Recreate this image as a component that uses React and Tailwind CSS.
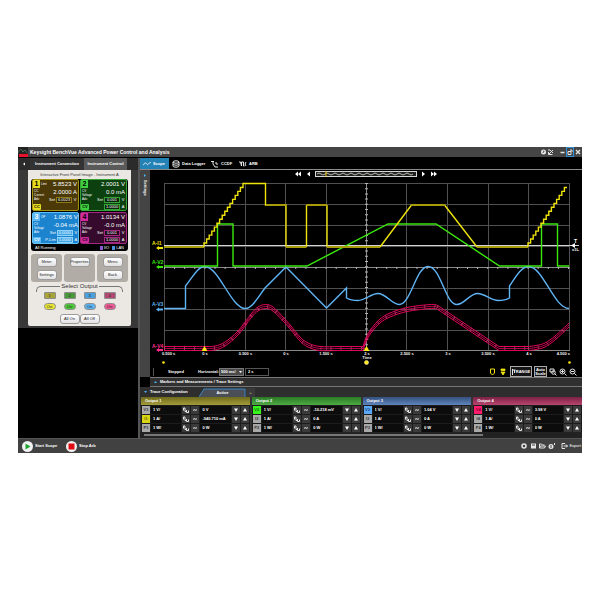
import React from "react";

const SCREENS = [
  {
    n: "1", mode: "Limt", volts: "5.8523 V", amps: "2.0000 A", notes: ["CC", "Current", "Adv"], badge: "CC",
    sets: ["6.0023", ""], box: "border-[#a39312] bg-[#4b3a08]", tag: "bg-[#e6dc1e] text-black", field: "border-[#8d7d18] bg-[#2c2202]",
  },
  {
    n: "2", mode: "", volts: "2.0001 V", amps: "0.0 mA", notes: ["CV", "Voltage", "Adv"], badge: "CV",
    sets: ["0.001", "1.0000"], box: "border-[#35a335] bg-[#0d400f]", tag: "bg-[#3fd23f] text-black", field: "border-[#35a335] bg-[#082808]",
  },
  {
    n: "3", mode: "OP", volts: "1.0876 V", amps: "-0.04 mA", notes: ["CV", "Voltage", "Adv"], badge: "CV",
    sets: ["0.0000", "1.0000"], box: "border-[#63c0f5] bg-[#1c84cf]", tag: "bg-[#5bb9f5] text-white", field: "border-[#8fd3fb] bg-[#3da4e6]",
  },
  {
    n: "4", mode: "", volts: "1.0134 V", amps: "-0.0 mA", notes: ["CV", "Voltage", "Adv"], badge: "CV",
    sets: ["0.001", "1.0000"], box: "border-[#a3287f] bg-[#360a2c]", tag: "bg-[#d02a9c] text-black", field: "border-[#a3287f] bg-[#22051b]",
  },
];

const OUTPUTS = [
  { name: "Output 1", head: "from-[#6f6a1c] to-[#a39c3a]", rows: [["V1", "1 V/", "0 V", ""], ["I1", "1 A/", "-940.710 mA", "bg-[#d8d414] text-[#5c5a00]"], ["P1", "1 W/", "0 W", ""]] },
  { name: "Output 2", head: "from-[#2b7a25] to-[#4faa45]", rows: [["V2", "1 V/", "-10.218 mV", "bg-[#35f51c] text-[#0d6b04]"], ["I2", "1 A/", "0 A", ""], ["P2", "1 W/", "0 W", ""]] },
  { name: "Output 3", head: "from-[#34507e] to-[#5f86bd]", rows: [["V3", "1 V/", "1.04 V", "bg-[#5ba8f5] text-[#0d3f78]"], ["I3", "1 A/", "0 A", ""], ["P3", "1 W/", "0 W", ""]] },
  { name: "Output 4", head: "from-[#7d2144] to-[#b8466f]", rows: [["V4", "1 V/", "3.98 V", "bg-[#ff1a6c] text-[#7d0030]"], ["I4", "1 A/", "0 A", ""], ["P4", "1 W/", "0 W", ""]] },
];

function stairs(x, y, dx, dy, count) {
  let d = "";
  for (let i = 0; i < count; i++) d += `v${-dy} h${dx} `;
  return `M${x} ${y} ${d}`;
}

function smooth(points) {
  let d = `M${points[0][0]} ${points[0][1]}`;
  for (let i = 0; i < points.length - 1; i++) {
    const a = points[i - 1] || points[i];
    const b = points[i];
    const c = points[i + 1];
    const e = points[i + 2] || c;
    d += ` C${b[0] + (c[0] - a[0]) / 6} ${b[1] + (c[1] - a[1]) / 6} ${c[0] - (e[0] - b[0]) / 6} ${c[1] - (e[1] - b[1]) / 6} ${c[0]} ${c[1]}`;
  }
  return d;
}

const RED = [
  smooth([[164, 348.5], [190, 348.5], [204, 348.5], [215, 348], [225, 344], [238, 333], [251, 316], [258, 309], [265.5, 306.5], [273, 309], [284, 320], [291, 328], [300, 339], [308, 345], [320, 348.5], [340, 348.5], [363, 348.5]]),
  smooth([[363, 348.5], [366, 340], [371, 331], [380, 321], [390, 315], [407, 309.5], [430, 306.5], [437, 307]]),
  "M437 307 L499 348.5 H528",
  smooth([[528, 348.5], [536, 347.5], [545, 345], [555, 338], [569, 325]]),
].join(" ");

const BLUE =
  "M164 308.5 H185.5 V286 C192 278 198 266.5 204.5 266.5 C219 266.5 231 308.5 245.5 308.5 C252 308.5 259 296 265 288 L286 267 L326.5 308 L346.5 288 V298 C350 300 354 300.5 358 300.5 C365 300.5 371 293.5 378 293.5 C386 293.5 392 304.5 399 304.5 C411 304.5 416 266.5 428 266.5 C441 266.5 445 304.5 457 304.5 C464 304.5 470 293.5 477.5 293.5 C485 293.5 491 300.5 498 300.5 C502 300.5 506 300 509.5 298 V286 C515 278 521 266.5 528.5 266.5 C543 266.5 554 308.5 569 308.5";

const COLS = [164.5, 204.5, 245.5, 285.5, 326.5, 366.5, 406.5, 447.5, 488.5, 528.5, 569.5];
const ROWS = [183.5, 204.5, 225.5, 246.5, 267.5, 288.5, 309.5, 330.5, 350.5];

function Chart() {
  return (
    <svg viewBox="150 178 432 188" className="block w-full" fontFamily="Liberation Sans, sans-serif" fontSize="5" fontWeight="700">
      <g stroke="#505050" strokeWidth="1">
        {COLS.map((x) => <path key={x} d={`M${x} 183 V351`} />)}
        {ROWS.map((y) => <path key={y} d={`M164 ${y} H570`} />)}
      </g>
      <path d="M366.5 183 V351 M164 267.5 H570 M164 350.5 H570" stroke="#8a8a8a" strokeWidth="1" />
      <path d="M366.5 183 V351" stroke="#b5b5b5" strokeWidth="3" strokeDasharray="1 4.2" />
      <path d="M164 268 H570" stroke="#b5b5b5" strokeWidth="2" strokeDasharray="1 9.1" />
      <path d="M164 245.5 H579" stroke="#d4d4d4" strokeWidth="1" />
      <g fill="none" strokeWidth="1.4">
        <g stroke="#e2005a" strokeWidth="1">
          <path d={RED} stroke="#d97a9b" strokeWidth="4" strokeDasharray="0.8 9.2" opacity="0.7" />
          <path d={RED} transform="translate(0 -2)" />
          <path d={RED} strokeWidth="1" opacity="0.8" />
          <path d={RED} transform="translate(0 2)" />
        </g>
        <path d={BLUE} stroke="#5fb4f5" />
        <path d="M164 266 H217.500 V224 H233 V266 H307 L388 224 H436 L499.500 266 H541.500 V224 H557.500 V266 H569" stroke="#3be80c" />
        <path d="M164 247 H204" stroke="#a89c08" strokeWidth="1.800" />
        <path d={`${stairs(204, 247, 2.6, 3.97, 16)} V183.500 H265.500 V205 H286 V247 M306.500 247 V205 M327 205 V247 M380 247 L411.500 205 M444.500 205 L477 247`} stroke="#efe30c" />
        <path d="M266 205 H286 M286 247 H306.500 M306.500 205 H327 M327 247 H380 M411 205 H445 M477 247 H528" stroke="#a89c08" strokeWidth="1.800" />
        <path d={stairs(528, 247, 2.6, 3.97, 15)} stroke="#efe30c" />
      </g>
      <path d="M204.500 346 l3 5 h-6 z M366.500 346 l3 5 h-6 z" fill="#ffe816" />
      <path d="M571 245.500 l4 -2.500 v5 z" fill="#fff" />
      <text x="574" y="243" fill="#fff">T</text>
      <text x="572" y="251" fill="#fff" fontSize="4">x1L</text>
      <g>
        <text x="152" y="245" fill="#f2e60c">A-I1</text>
        <text x="152" y="264" fill="#3be80c">A-V2</text>
        <text x="152" y="306" fill="#5fb4f5">A-V3</text>
        <text x="152" y="348" fill="#ff2a8c">A-V4</text>
        <path d="M156 248 l3 -2 v1 h4 v2 h-4 v1 z" fill="#f2e60c" />
        <path d="M156 267 l3 -2 v1 h4 v2 h-4 v1 z" fill="#3be80c" />
        <path d="M156 309.500 l3 -2 v1 h4 v2 h-4 v1 z" fill="#5fb4f5" />
        <path d="M156 350 l3 -2 v1 h4 v2 h-4 v1 z" fill="#ff2a8c" />
      </g>
      <g fill="#f4f4f4" fontSize="4">
        <text x="162" y="355">0.500 s</text>
        <g textAnchor="middle">
          <text x="205" y="355">0 s</text>
          <text x="245.500" y="355">0.500 s</text>
          <text x="286" y="355">0 s</text>
          <text x="326" y="355">1.500 s</text>
          <text x="367" y="355">2 s</text>
          <text x="367" y="359">Time</text>
          <text x="407" y="355">2.500 s</text>
          <text x="448" y="355">3 s</text>
          <text x="488" y="355">3.500 s</text>
          <text x="529" y="355">4 s</text>
        </g>
        <text x="570" y="355" textAnchor="end">4.500 s</text>
      </g>
      <g fill="#ffe816">
        <circle cx="163.500" cy="362.500" r="1.300" />
        <circle cx="366.500" cy="362.500" r="2" stroke="#fff6a0" strokeWidth="0.600" />
        <circle cx="569.500" cy="362.500" r="1.300" />
      </g>
    </svg>
  );
}

function Svg({ w = 8, children }) {
  return (
    <svg width={w} height="8" viewBox={`0 0 ${w} 8`} fill="none" stroke="#e6e6e6" strokeWidth="1" className="shrink-0">
      {children}
    </svg>
  );
}

function PillButton({ children }) {
  return (
    <button className="flex h-[10px] w-[20px] items-center justify-center rounded-[3px] border border-[#9b9b9b] bg-gradient-to-b from-white to-[#e2e2e2] text-[4px] leading-[4px] text-[#222]">
      {children}
    </button>
  );
}

function OutputScreen({ s }) {
  return (
    <div className={`flex h-[32px] justify-between whitespace-nowrap rounded-[2px] border text-[4px] leading-[4px] text-white ${s.box}`}>
      <div className="flex w-[8px] flex-col items-start">
        <span className={`h-[8px] w-[7px] text-center text-[7px] font-bold leading-[8px] ${s.tag}`}>{s.n}</span>
        <div className="flex flex-col pl-px pt-px text-[3px]">
          {s.notes.map((n) => <span key={n}>{n}</span>)}
        </div>
        <span className={`mt-auto h-[6px] w-[8px] rounded-[1px] text-center font-bold leading-[6px] ${s.tag}`}>{s.badge}</span>
      </div>
      <span className="w-[6px] pt-[2px] text-[3px]">{s.mode}</span>
      <div className="flex flex-1 flex-col items-end pr-px">
        <span className="h-[8px] text-[6px] leading-[8px]">{s.volts}</span>
        <span className="h-[8px] text-[6px] leading-[8px]">{s.amps}</span>
        <div className="flex h-[7px] items-center gap-px">
          <span>Set</span>
          <span className={`h-[6px] w-[16px] border text-center ${s.field}`}>{s.sets[0]}</span>
          <span className="w-[4px] text-center">V</span>
        </div>
        {s.sets[1] && (
          <div className="flex h-[7px] items-center gap-px">
            {s.n === "3" && <span>P-Lim</span>}
            <span className={`h-[6px] w-[16px] border text-center ${s.field}`}>{s.sets[1]}</span>
            <span className="w-[4px] text-center">A</span>
          </div>
        )}
      </div>
    </div>
  );
}

function InstrumentPanel() {
  const keys = ["bg-[#a9a43a]", "bg-[#4a9a3c]", "bg-[#4a9fdc]", "bg-[#b04a72]"];
  const ons = ["bg-[#e8e436]", "bg-[#4fc93c]", "bg-[#5fb4f0]", "bg-[#f05a94]"];
  return (
    <div className="rounded-b-[2px] bg-[#ebe8e3] px-[3px] pb-[2px] text-[#333]">
      <h2 className="h-[9px] whitespace-nowrap text-center text-[4px] leading-[9px]">Interactive Front Panel Image - Instrument A</h2>
      <div className="rounded-[3px] bg-black px-px">
        <div className="grid grid-cols-2 gap-px">
          {SCREENS.map((s) => <OutputScreen key={s.n} s={s} />)}
        </div>
        <div className="flex h-[7px] items-center gap-[3px] px-[3px] text-[4px] leading-[7px] text-white">
          <span>All Running</span>
          <span className="ml-auto flex items-center gap-px"><i className="h-[4px] w-[3px] bg-[#8a5ad0]" />I/O</span>
          <span className="flex items-center gap-px"><i className="h-[4px] w-[3px] bg-[#4a8fe0]" />LAN</span>
        </div>
      </div>
      <div className="mt-[3px] grid grid-cols-3 gap-[2px]">
        {[["Meter", "Settings"], ["Properties"], ["Menu", "Back"]].map((g) => (
          <div key={g[0]} className="flex h-[28px] flex-col items-center gap-[3px] rounded-[3px] bg-[#b1ada6] pt-[3px]">
            {g.map((b) => <PillButton key={b}>{b}</PillButton>)}
          </div>
        ))}
      </div>
      <div className="mt-px flex h-[9px] items-start px-[5px]">
        <span className="mt-[3px] h-[6px] flex-1 rounded-tl-[5px] border-l border-t border-[#777]" />
        <h3 className="px-px text-[6px] leading-[7px]">Select Output</h3>
        <span className="mt-[3px] h-[6px] flex-1 rounded-tr-[5px] border-r border-t border-[#777]" />
      </div>
      <div className="flex justify-center gap-[8px]">
        {keys.map((c, i) => (
          <button key={c} className={`h-[7px] w-[12px] rounded-[1px] border border-[#8c8c8c] text-[4px] leading-[5px] text-[#222] ${c}`}>{i + 1}</button>
        ))}
      </div>
      <div className="mt-[4px] flex justify-center gap-[8px]">
        {ons.map((c) => (
          <button key={c} className={`h-[7px] w-[12px] rounded-full border border-[#8c8c8c] text-[4px] leading-[5px] text-[#222] ${c}`}>On</button>
        ))}
      </div>
      <div className="mt-[4px] flex justify-center">
        <PillButton>All On</PillButton>
        <PillButton>All Off</PillButton>
      </div>
    </div>
  );
}

function Trace({ row, output }) {
  const [id, scale, offset, tone] = row;
  const cell = "h-[8px] min-w-0 flex-1 bg-[#0c0c0c] px-[2px] text-[4px] font-bold leading-[8px] text-white outline-none";
  const btn = "flex h-[8px] w-[8px] shrink-0 items-center justify-center bg-[#3a3a3a]";
  return (
    <div className="flex h-[9px] items-center gap-px px-px">
      <button className={`h-[8px] w-[8px] shrink-0 text-center text-[4px] font-bold leading-[8px] ${tone || "bg-[#a8a8a8] text-[#333]"}`}>{id}</button>
      <input className={cell} defaultValue={scale} aria-label={`${output} ${id} scale`} />
      <button className={btn} aria-label={`${id} coupling`}><Svg><path d="M1.500 4.500 V2 h1.500 v3.500 h1.500 M4.500 4 v2.500 h2 v-2" /></Svg></button>
      <button className={btn} aria-label={`${id} wave`}><Svg><path d="M2 4.500 q1 -1.500 2 -0.500 t2 -0.500" /></Svg></button>
      <input className={cell} defaultValue={offset} aria-label={`${output} ${id} offset`} />
      <button className={btn} aria-label={`${id} down`}><Svg><path d="M2 2.500 h4 l-2 3.500 z" fill="#fff" stroke="none" /></Svg></button>
      <button className={btn} aria-label={`${id} up`}><Svg><path d="M2 5.500 h4 l-2 -3.500 z" fill="#fff" stroke="none" /></Svg></button>
    </div>
  );
}

function ScopeTabs() {
  const tab = "flex h-[11px] items-center gap-[2px] text-[4px] font-bold text-white";
  return (
    <nav className="flex h-[12px] items-end gap-[3px] border-b border-[#8a8a8a] bg-black">
      <button className={`${tab} w-[29px] bg-[#2382b6] pl-[3px]`}>
        <Svg><path d="M0 5 C1 5 1 3 2.500 3 S4 6 5.500 4 S7 2 8 3" /></Svg>Scope
      </button>
      <button className={`${tab} w-[36px]`}>
        <Svg><ellipse cx="4" cy="2" rx="3" ry="1.200" /><path d="M1 2 v4 c0 1.500 6 1.500 6 0 v-4 M1 4 c0 1.500 6 1.500 6 0" /></Svg>Data Logger
      </button>
      <button className={`${tab} w-[25px]`}>
        <Svg><path d="M0 1.500 h3 M2 1 v3 l2 3 h3 M5 2 v2 h2" /></Svg>CCDF
      </button>
      <button className={tab}>
        <Svg><path d="M0 2 h1.500 l1 4 v-4 h2 v4 h1 M7 2 l-1 2 l1 2" /></Svg>ARB
      </button>
    </nav>
  );
}

function ScopeControls() {
  return (
    <div className="flex h-[11px] items-center pl-[3px] pr-[5px] text-[4px] font-bold text-white">
      <span className="h-[8px] w-px bg-[#555]" />
      <span className="ml-[14px] w-[30px]">Stopped</span>
      <label htmlFor="horizontal" className="w-[21px]">Horizontal:</label>
      <span className="flex h-[8px] w-[25px] items-center border border-[#777] bg-[#4a4a4a]">
        <select id="horizontal" className="h-[6px] min-w-0 flex-1 appearance-none bg-transparent px-px text-[4px] leading-[6px]">
          <option>500 ms/</option>
        </select>
        <Svg w={5}><path d="M1 3 h3 l-1.500 2 z" fill="#fff" stroke="none" /></Svg>
      </span>
      <input aria-label="Horizontal delay" defaultValue="2 s" className="ml-px h-[8px] w-[24px] border border-[#555] bg-black px-[2px] text-[4px] leading-[6px]" />
      <div className="ml-auto flex items-center gap-[2px]">
        <button aria-label="Marker one"><Svg><path d="M1.500 1 h4 v4 l-2 2 l-2 -2 z" stroke="#f2e60c" /></Svg></button>
        <button aria-label="Marker two" className="mr-px"><Svg><path d="M2 1 h4 v1.500 h-4 z M2 4 h4 l-2 3 z" fill="#f2e60c" stroke="#f2e60c" strokeWidth="0.800" /></Svg></button>
        <button className="flex h-[11px] w-[22px] items-center justify-center border border-[#aaa] bg-[#151515]"><Svg w={4}><path d="M0.500 1 v6 M0.500 2 h3 M2.500 2 v3" /></Svg>RANGE</button>
        <button className="h-[11px] w-[13px] border border-[#aaa] bg-[#151515] leading-[4px]">Auto Scale</button>
        <button aria-label="Zoom area"><Svg><path d="M1 1 h4 v3 h-4 z M7.500 7.500 l-2 -2" /><circle cx="4.500" cy="4.500" r="1.800" /></Svg></button>
        <button aria-label="Zoom in"><Svg><circle cx="3.500" cy="3.500" r="2.500" /><path d="M5.500 5.500 L7.500 7.500 M2 3.500 h3 M3.500 2 v3" /></Svg></button>
        <button aria-label="Zoom out"><Svg><circle cx="3.500" cy="3.500" r="2.500" /><path d="M5.500 5.500 L7.500 7.500 M2 3.500 h3" /></Svg></button>
      </div>
    </div>
  );
}

function Navigator() {
  return (
    <div className="flex h-[8px] items-center justify-center gap-[2px]">
      <button aria-label="First"><Svg><path d="M3 1.500 v5 l-3 -2.500 z M6 1.500 v5 l-3 -2.500 z" fill="#fff" stroke="none" /></Svg></button>
      <button aria-label="Previous"><Svg><path d="M5 1.500 v5 l-3 -2.500 z" fill="#fff" stroke="none" /></Svg></button>
      <svg width="102" height="6" viewBox="0 0 102 6" fill="none">
        <rect x="0.500" y="0.500" width="101" height="5" fill="#222" stroke="#d8d8d8" />
        <path d="M2 3 q2 -2 4 0 t4 0 t4 0 t4 0 t4 0 t4 0 t4 0 t4 0 t4 0 t4 0 t4 0 t4 0 t4 0 t4 0 t4 0 t4 0 t4 0 t4 0 t4 0 t4 0 t4 0 t4 0 t4 0 t4 0" stroke="#b8b8a8" />
        <path d="M11 0 v6" stroke="#f0c814" />
      </svg>
      <button aria-label="Next"><Svg><path d="M3 1.500 v5 l3 -2.500 z" fill="#fff" stroke="none" /></Svg></button>
      <button aria-label="Last"><Svg><path d="M2 1.500 v5 l3 -2.500 z M5 1.500 v5 l3 -2.500 z" fill="#fff" stroke="none" /></Svg></button>
    </div>
  );
}

export default function App() {
  return (
    <main className="flex min-h-screen items-center bg-white px-[18px] font-['Liberation_Sans',sans-serif]">
      <div className="w-full bg-black">
        <header className="flex h-[11px] items-center border-b border-black bg-[#454545] pr-px text-white">
          <svg width="10" height="10" viewBox="0 0 10 10"><rect width="10" height="10" fill="#222" /><path d="M0 6 q2.500 -7 5 -1 q2 -4 4 1" fill="none" stroke="#4d6b55" /><rect x="1" y="7" width="9" height="3" fill="#e8112d" /></svg>
          <h1 className="ml-[2px] whitespace-nowrap text-[5px] font-bold leading-[10px]">Keysight BenchVue Advanced Power Control and Analysis</h1>
          <div className="ml-auto flex items-center">
            <button aria-label="Help"><Svg w={7}><circle cx="3.500" cy="4" r="2.500" fill="#e6e6e6" stroke="none" /><path d="M3 3 h1 v1 h-1 v1" stroke="#444" strokeWidth="0.700" /></Svg></button>
            <button aria-label="Tools" className="mr-[4px]"><Svg><path d="M1 2 h2 l3 3 M2 6 l4 -4 M1.500 4 v2.500 h4" /></Svg></button>
            <button aria-label="Minimise"><Svg w={7}><path d="M1.500 4.500 h4" strokeWidth="1.500" /></Svg></button>
            <button aria-label="Restore" className="border border-[#2f8fd8]"><Svg w={6}><path d="M1 3.500 h3 v3 h-3 z M3 2 h2 v2" /></Svg></button>
            <button aria-label="Close"><Svg w={7}><path d="M2 2 l4 4 M6 2 l-4 4" strokeWidth="1.300" /></Svg></button>
          </div>
        </header>

        <div className="flex">
          <aside className="flex w-[122px] shrink-0 flex-col border-r-2 border-[#555]">
            <div className="flex h-[12px] items-center bg-[#2b2b2b] text-[4px] text-white">
              <button aria-label="Collapse" className="flex w-[12px] justify-center"><Svg w={6}><path d="M4 2.500 v3 l-2 -1.500 z" fill="#fff" stroke="none" /></Svg></button>
              <button className="h-[12px] w-[54px] bg-[#333] font-bold">Instrument Connection</button>
              <button className="h-[12px] w-[43px] bg-[#5a5a5a] font-bold">Instrument Control</button>
            </div>
            <div className="bg-[#383838] pb-[2px] pl-[10px] pr-[7px]">
              <InstrumentPanel />
            </div>
          </aside>

          <section className="min-w-0 flex-1">
            <ScopeTabs />
            <div className="flex">
              <div className="flex w-[10px] shrink-0 flex-col items-center bg-[#444] pt-[2px]">
                <Svg w={4}><path d="M1 2 v3 l2 -1.500 z" fill="#4ab4f0" stroke="none" /></Svg>
                <span className="text-[4px] font-bold leading-[6px] text-white [writing-mode:vertical-rl]">Settings</span>
              </div>
              <div className="min-w-0 flex-1">
                <Navigator />
                <Chart />
                <ScopeControls />
              </div>
            </div>
            <div className="ml-[10px] flex h-[10px] items-center gap-[3px] border-y border-[#777] bg-[#303030] pl-[4px] text-[4px] font-bold text-white">
              <Svg w={3}><path d="M0 5 h3 l-1.500 -2 z" fill="#4ab4f0" stroke="none" /></Svg>
              <span>Markers and Measurements / Trace Settings</span>
            </div>
            <div className="flex h-[10px] items-end bg-[#2e2e2e] pl-[4px] text-[4px] font-bold text-white">
              <span className="flex h-[10px] w-[55px] items-center gap-[3px]"><Svg w={3}><path d="M0 3 h3 l-1.500 2 z" fill="#4ab4f0" stroke="none" /></Svg>Trace Configuration</span>
              <button className="relative h-[9px] w-[47px]">
                <svg viewBox="0 0 47 9" className="absolute inset-0 h-full w-full"><path d="M0 9 L5 1 H46 V9" fill="#4a4f57" stroke="#3c86c2" /></svg>
                <span className="relative">Active</span>
              </button>
              <button className="h-[9px] w-[9px] bg-[#3a3a3a] leading-[9px] text-[#999]">+</button>
            </div>
            <div className="grid grid-cols-4 gap-[2px] bg-[#333] pl-px">
              {OUTPUTS.map((o) => (
                <div key={o.name} className="min-w-0 bg-[#1c1c1c]">
                  <h3 className={`h-[8px] bg-gradient-to-b pl-[4px] text-[4px] font-bold leading-[8px] text-white ${o.head}`}>{o.name}</h3>
                  {o.rows.map((r) => <Trace key={r[0]} row={r} output={o.name} />)}
                </div>
              ))}
            </div>
            <div className="flex h-[6px] items-center bg-[#222] px-[4px]">
              <span className="h-[2px] w-[78%] bg-[#777]" />
            </div>
          </section>
        </div>

        <footer className="flex h-[15px] items-center border-t border-[#555] bg-[#414141] px-px pl-[4px] text-[4px] font-bold text-white">
          <button className="flex w-[44px] items-center gap-[2px]">
            <svg width="11" height="11" viewBox="0 0 11 11"><circle cx="5.500" cy="5.500" r="5.500" fill="#f2f2f2" /><path d="M3.500 2.500 v6 l5 -3 z" fill="#1fa62c" /></svg>Start Scope
          </button>
          <button className="flex items-center gap-[2px]">
            <svg width="11" height="11" viewBox="0 0 11 11"><circle cx="5.500" cy="5.500" r="5.500" fill="#f2f2f2" /><rect x="2.500" y="2.500" width="6" height="6" fill="#e00b12" /></svg>Stop Arb
          </button>
          <div className="ml-auto flex items-center gap-px">
            <button aria-label="Options"><Svg><circle cx="4" cy="4" r="2" strokeWidth="1.500" /></Svg></button>
            <button aria-label="Save"><Svg><path d="M2 1.500 h5 v5 h-5 z" fill="#e6e6e6" stroke="none" /><path d="M3 3 h3" stroke="#444" /></Svg></button>
            <button aria-label="Open"><Svg><path d="M1.500 6 v-4 h2 l1 1 h2 M1.500 6 h5 l1 -2 h-5 z" /></Svg></button>
            <button aria-label="Information"><Svg w={9}><circle cx="4" cy="4.500" r="2.500" fill="#e6e6e6" stroke="none" /><path d="M4 3 v3" stroke="#444" /><path d="M7.500 1 v2" /></Svg></button>
            <button className="ml-[3px] flex items-center gap-px font-normal"><Svg><path d="M5 1.500 h-3 v5 h3 M3.500 4 h4 M6 2.500 l1.500 1.500 l-1.500 1.500" /></Svg>Export</button>
          </div>
        </footer>
      </div>
    </main>
  );
}
